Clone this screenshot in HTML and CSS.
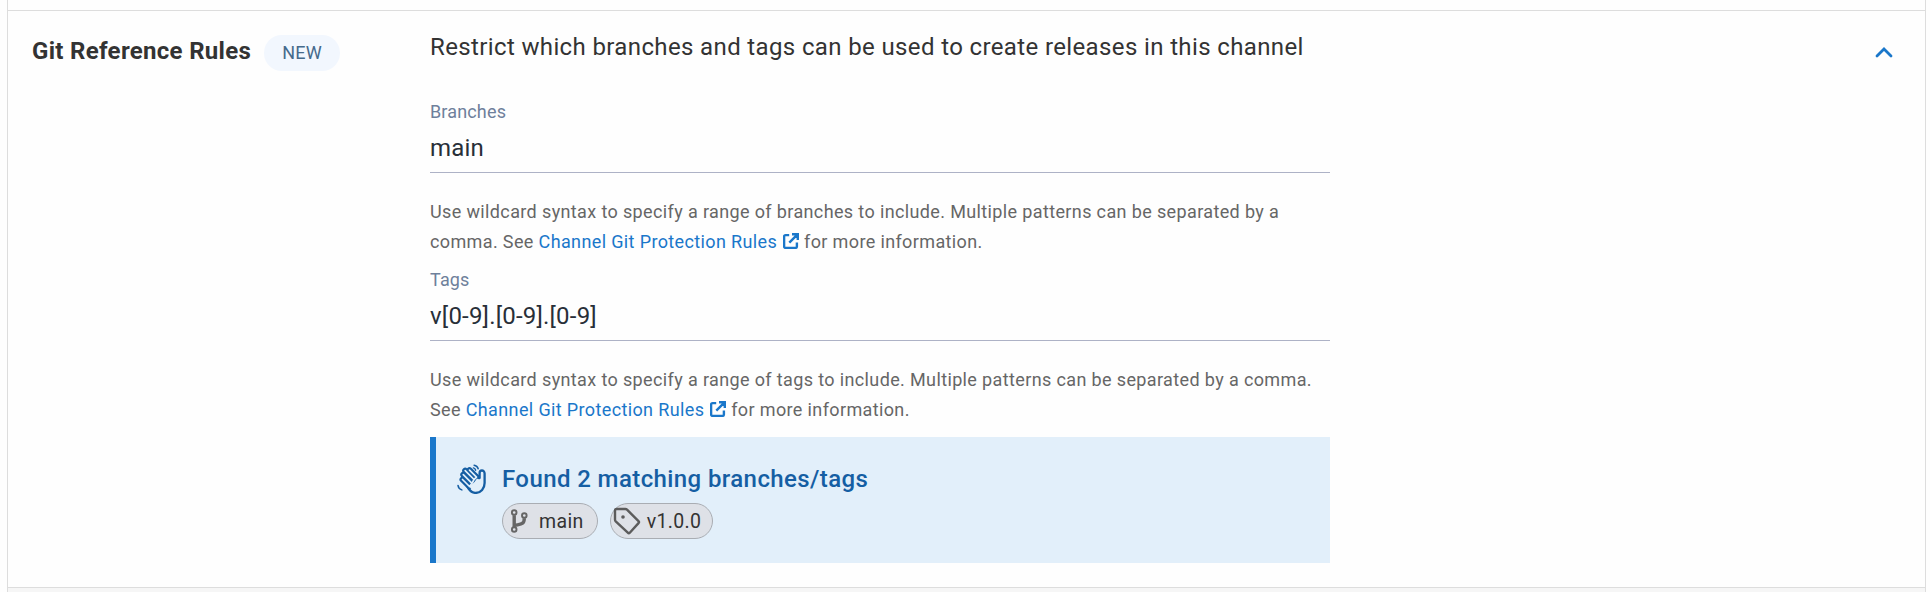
FILE: index.html
```html
<!DOCTYPE html>
<html lang="en">
<head>
<meta charset="utf-8">
<title>Git Reference Rules</title>
<link rel="stylesheet" href="styles.css">
</head>
<body>
<div class="panel">
  <section class="row">
    <div class="heading">
      <h2 class="title">Git Reference Rules</h2>
      <span class="badge">NEW</span>
    </div>
    <div class="content">
      <p class="description">Restrict which branches and tags can be used to create releases in this channel</p>
      <div class="field">
        <label class="label">Branches</label>
        <div class="value">main</div>
        <p class="help">Use wildcard syntax to specify a range of branches to include. Multiple patterns can be separated by a<br>comma. See <a class="link">Channel Git Protection Rules<svg class="external" viewBox="0 0 16 16"><path d="M6.2 2.1H2.6Q1.1 2.1 1.1 3.6V13.4Q1.1 14.9 2.6 14.9H12.4Q13.9 14.9 13.9 13.4V9.6M9 1.2H14.8V7M14.3 1.7L6.3 9.7"/></svg></a> for more information.</p>
      </div>
      <div class="field">
        <label class="label">Tags</label>
        <div class="value">v[0-9].[0-9].[0-9]</div>
        <p class="help">Use wildcard syntax to specify a range of tags to include. Multiple patterns can be separated by a comma.<br>See <a class="link">Channel Git Protection Rules<svg class="external" viewBox="0 0 16 16"><path d="M6.2 2.1H2.6Q1.1 2.1 1.1 3.6V13.4Q1.1 14.9 2.6 14.9H12.4Q13.9 14.9 13.9 13.4V9.6M9 1.2H14.8V7M14.3 1.7L6.3 9.7"/></svg></a> for more information.</p>
      </div>
      <div class="alert">
        <svg class="wave" viewBox="0 0 30 30">
          <path class="palm" d="M8 19L11.5 24.5C14 28 16 28.9 18.5 28.9C24 28.9 27.6 24.5 27.6 19V9.6C27.6 7.4 26.3 6.5 24.9 6.5C23.3 6.5 22.6 7.6 22.6 9V14L19 11Z"/>
          <path class="finger-edge" d="M12.5 6.2L19.5 13.2M8.2 6.7L17 15.5M6.3 10.6L15 19.3M5.5 15.5L12.5 22.5"/>
          <path class="finger-fill" d="M12.5 6.2L19.5 13.2L17 15.5M8.2 6.7L17 15.5L15 19.3M6.3 10.6L15 19.3L12.5 22.5M5.5 15.5L12.5 22.5"/>
          <path class="palm-fill" d="M20 14.5L24 17V20Q23 26.5 18 26.8Q14.5 26.5 12.5 22.5L17.5 18Z"/>
          <path class="motion" d="M17.1 1.2Q20.3 1.8 21.2 4.8M16.4 3.9Q18.2 4.4 18.6 6.2M1 21.4Q1.4 24.8 4.8 25.9"/>
        </svg>
        <div class="alert-body">
          <h3 class="alert-title">Found 2 matching branches/tags</h3>
          <div class="chips">
            <span class="chip">
              <svg class="branch" viewBox="0 0 18 24"><circle cx="4.2" cy="3.5" r="2.3"/><circle cx="14.3" cy="6.5" r="2.3"/><circle cx="4.2" cy="20.5" r="2.3"/><path d="M4.2 6.3V18M14.3 9.2C14.3 15.5 11 15 4.8 16.5"/></svg>
              main
            </span>
            <span class="chip chip-tag">
              <svg class="tag" viewBox="0 0 28 28"><path d="M2 3.6Q2 2 3.6 2H12.3Q13.3 2 14 2.7L25.5 14.1Q26.5 15.1 25.5 16.1L16.8 25.7Q15.8 26.7 14.8 25.7L2.7 14.3Q2 13.6 2 12.6Z"/><circle cx="10" cy="10" r="1.8"/></svg>
              v1.0.0
            </span>
          </div>
        </div>
      </div>
    </div>
    <svg class="chevron" viewBox="0 0 18 12"><path d="M2 10L9 3L16 10"/></svg>
  </section>
  <div class="next-row"></div>
</div>
</body>
</html>
```
FILE: styles.css
```css
* { box-sizing: border-box; }
body {
  margin: 0;
  background: #fefefe;
  font-family: Roboto, sans-serif;
  color: #333;
  overflow: hidden;
}
h2, h3, p { margin: 0; }
.panel {
  margin: 0 4px 0 7px;
  height: 592px;
  padding-top: 10px;
  border: solid #ddd;
  border-width: 0 1px;
  display: flex;
  flex-direction: column;
}
.row {
  height: 577px;
  flex: none;
  border-top: 1px solid #ddd;
  padding: 18px 32px 0 24px;
  display: flex;
  align-items: flex-start;
}
.next-row { flex: 1; background: #f6f6f6; border-top: 1px solid #ddd; }
.heading {
  width: 398px;
  padding-top: 6px;
  display: flex;
  align-items: center;
  gap: 13px;
}
.title { font-size: 24px; line-height: 32px; padding-bottom: 4px; font-weight: 700; letter-spacing: .31px; white-space: nowrap; }
.badge {
  height: 36px;
  padding: 0 18px;
  border-radius: 18px;
  background: #f2f7fe;
  color: #456a8c;
  font-size: 18px;
  line-height: 36px;
  letter-spacing: .2px;
}
.content { width: 900px; }
.description { font-size: 24px; line-height: 36px; letter-spacing: .37px; margin-bottom: 38px; white-space: nowrap; }
.field { display: flex; flex-direction: column; margin-bottom: 14px; }
.field + .field { margin-bottom: 12px; }
.label { font-size: 18px; line-height: 18px; letter-spacing: .15px; color: #6e809b; }
.value {
  font-size: 24px;
  line-height: 28px;
  letter-spacing: .2px;
  padding: 13px 0 10px;
  border-bottom: 1px solid #adb2c6;
  color: #282f38;
}
.help { margin-top: 24px; font-size: 18px; line-height: 30px; letter-spacing: .37px; color: #666; white-space: nowrap; }
.link { color: #1a77ca; }
.external {
  width: 16px;
  height: 16px;
  margin-left: 6px;
  vertical-align: -1px;
  fill: none;
  stroke: currentColor;
  stroke-width: 2.4;
}
.alert {
  height: 126px;
  border-left: 6px solid #1a77ca;
  background: #e2effa;
  padding: 24px 0 0 21px;
  display: flex;
}
.wave { width: 30px; height: 30px; margin-top: 3px; fill: none; stroke: #155ea3; stroke-width: 2.3; stroke-linecap: round; stroke-linejoin: round; }
.palm { fill: #e2effa; }
.finger-edge { stroke-width: 6; }
.finger-fill { stroke: #e2effa; stroke-width: 1.7; }
.palm-fill { fill: #e2effa; stroke: none; }
.motion { stroke-width: 1.5; }
.alert-body { margin-left: 15px; }
.alert-title { font-size: 24px; line-height: 36px; font-weight: 500; letter-spacing: .4px; color: #155ea3; }
.chips { display: flex; gap: 12px; margin-top: 6px; }
.chip {
  height: 36px;
  padding: 1px 13px 0 7px;
  border: 1px solid #a9adb3;
  border-radius: 18px;
  background: #dee1e7;
  display: flex;
  align-items: center;
  gap: 11px;
  font-size: 19.5px;
  line-height: 34px;
  letter-spacing: .35px;
  color: #333;
}
.chip-tag { padding: 1px 11px 0 2px; gap: 6px; }
.branch { width: 18px; height: 24px; margin-top: -2px; fill: none; stroke: #666; stroke-width: 1.9; }
.branch path { stroke-width: 3.4; }
.tag { width: 28px; height: 28px; margin-top: -2px; fill: none; stroke: #5c5c5c; stroke-width: 2.4; stroke-linejoin: round; }
.tag circle { fill: #5c5c5c; stroke: none; }
.chevron { width: 18px; height: 12px; margin: 17px 0 0 auto; fill: none; stroke: #1a77ca; stroke-width: 2.8; stroke-linecap: round; }
```
